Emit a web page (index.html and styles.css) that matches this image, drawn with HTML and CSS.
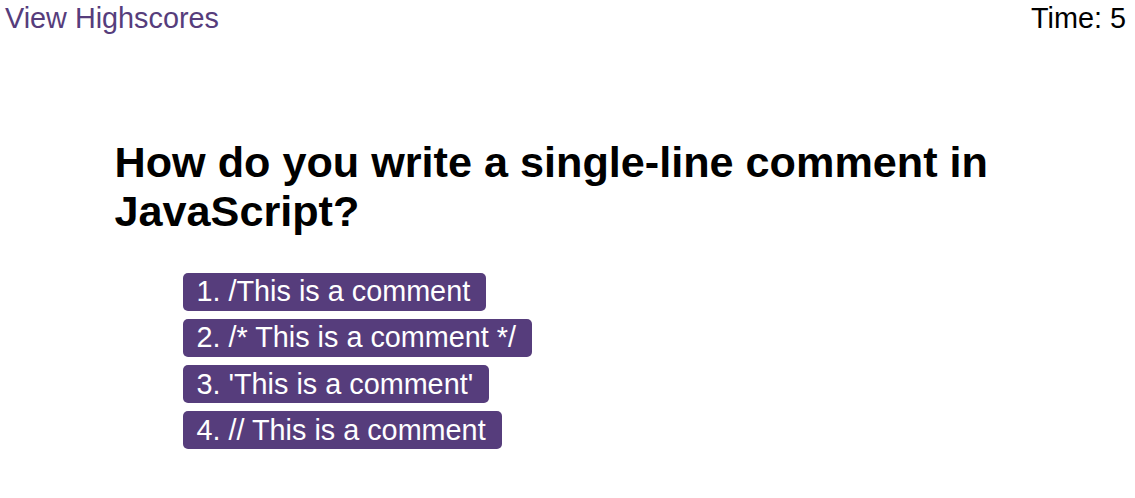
FILE: index.html
```html
<!DOCTYPE html>
<html lang="en">
<head>
<meta charset="utf-8">
<title>Code Quiz</title>
<link rel="stylesheet" href="styles.css">
</head>
<body>
<header class="topbar">
  <a class="highscores" href="#">View Highscores</a>
  <div class="timer">Time: <span>5</span></div>
</header>
<main class="quiz">
  <h1 class="question">How do you write a single-line comment in JavaScript?</h1>
  <div class="choices">
    <button class="choice">1. /This is a comment</button>
    <button class="choice">2. /* This is a comment */</button>
    <button class="choice">3. 'This is a comment'</button>
    <button class="choice">4. // This is a comment</button>
  </div>
</main>
</body>
</html>
```

FILE: styles.css
```css
* { box-sizing: border-box; }
body {
  margin: 0;
  font-family: "Liberation Sans", Arial, sans-serif;
  font-size: 28.8px;
  color: #000;
  background: #fff;
}
.topbar {
  display: flex;
  justify-content: space-between;
  align-items: flex-start;
  padding: 2px 9px 0 5px;
  line-height: 33px;
}
.highscores {
  color: #563d7c;
  text-decoration: none;
}
.quiz {
  margin: 0 10%;
  padding-top: 103px;
}
.question {
  font-size: 43.2px;
  line-height: normal;
  font-weight: bold;
  margin: 0 0 36.5px 0;
  padding-left: 1px;
}
.choices {
  display: flex;
  flex-direction: column;
  align-items: flex-start;
  gap: 8.3px;
  padding-left: 69px;
}
.choice {
  font-family: "Liberation Sans", Arial, sans-serif;
  font-size: 28.8px;
  line-height: 33px;
  color: #fff;
  background: #563d7c;
  border: none;
  border-radius: 5px;
  padding: 2.5px 16px 2.5px 14px;
  cursor: pointer;
}
```
